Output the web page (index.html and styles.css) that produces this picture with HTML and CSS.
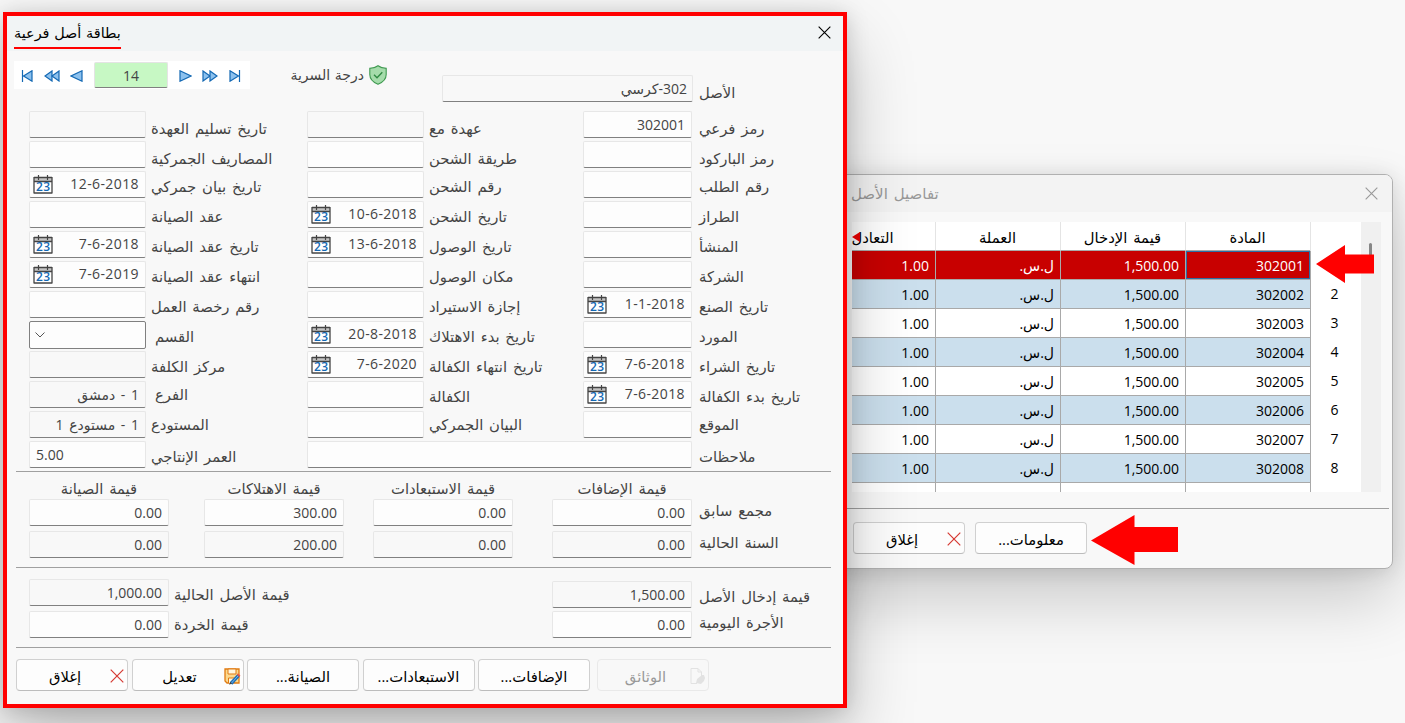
FILE: index.html
```html
<!DOCTYPE html>
<html lang="ar" dir="rtl">
<head>
    <meta charset="UTF-8">
    <title>بطاقة أصل فرعية</title>
    <link rel="stylesheet" href="styles.css">
</head>
<body>
<svg class="defs" width="0" height="0">
    <symbol id="calendar" viewBox="0 0 20 19">
        <rect x="1" y="2.5" width="18" height="15.5" fill="#fff"/>
        <rect x="1" y="2.5" width="18" height="4" fill="#c4c4c4"/>
        <path d="M1 2.5h18M1 6.5h18M1 18h18M1 2v16.5M19 2v16.5" stroke="#444" stroke-width="1.3" fill="none"/>
        <path d="M5.5 0v5M14.5 0v5" stroke="#444" stroke-width="1.2"/>
        <text x="10.3" y="16" text-anchor="middle" direction="ltr" class="cal-text">23</text>
    </symbol>
    <symbol id="cross" viewBox="0 0 14 14">
        <path d="M.7.7l12.6 12.6M13.3.7L.7 13.3" stroke="currentColor" stroke-width="1.2" fill="none"/>
    </symbol>
</svg>

<section class="window details">
    <header class="titlebar">
        <svg class="close" width="13" height="13"><use href="#cross"/></svg>
        <h2>تفاصيل الأصل</h2>
    </header>
    <div class="grid-view">
        <div class="scrollbar"><div class="thumb"></div></div>
        <div class="table-clip">
            <table>
                <thead>
                <tr><th></th><th>المادة</th><th>قيمة الإدخال</th><th>العملة</th><th>التعادل</th></tr>
                </thead>
                <tbody>
                <tr class="selected"><th></th><td class="current">302001</td><td>1,500.00</td><td>ل.س.</td><td>1.00</td></tr>
                <tr><th>2</th><td>302002</td><td>1,500.00</td><td>ل.س.</td><td>1.00</td></tr>
                <tr><th>3</th><td>302003</td><td>1,500.00</td><td>ل.س.</td><td>1.00</td></tr>
                <tr><th>4</th><td>302004</td><td>1,500.00</td><td>ل.س.</td><td>1.00</td></tr>
                <tr><th>5</th><td>302005</td><td>1,500.00</td><td>ل.س.</td><td>1.00</td></tr>
                <tr><th>6</th><td>302006</td><td>1,500.00</td><td>ل.س.</td><td>1.00</td></tr>
                <tr><th>7</th><td>302007</td><td>1,500.00</td><td>ل.س.</td><td>1.00</td></tr>
                <tr><th>8</th><td>302008</td><td>1,500.00</td><td>ل.س.</td><td>1.00</td></tr>
                <tr><th></th><td></td><td></td><td></td><td></td></tr>
                </tbody>
            </table>
            <svg class="more" width="8" height="10"><path d="M0 5l8-5v10z" fill="#e00"/></svg>
        </div>
    </div>
    <footer class="buttons">
        <button><span>معلومات...</span></button>
        <button><svg class="red-x" width="14" height="14"><use href="#cross"/></svg><span>إغلاق</span></button>
    </footer>
</section>

<svg class="arrow arrow-row" width="58" height="38" viewBox="0 0 58 38"><path d="M0 19L29 0v9.5h29v19H29V38z" fill="#f00"/></svg>
<svg class="arrow arrow-info" width="87" height="50" viewBox="0 0 87 50"><path d="M0 25.500L43.500 0v12H87v25H43.500v13z" fill="#f00"/></svg>

<section class="window card">
    <header class="titlebar">
        <svg class="close" width="13" height="13"><use href="#cross"/></svg>
        <h1>بطاقة أصل فرعية</h1>
    </header>

    <div class="top">
        <label class="asset-label">الأصل</label>
        <div class="field ro asset">302-كرسي</div>
        <div class="secrecy">
            <svg width="18" height="20" viewBox="0 0 18 20">
                <path d="M9 .8c2.400 1.900 5 2.600 8.200 2.600v6.200c0 4.700-3.600 7.900-8.200 9.700-4.600-1.800-8.200-5-8.200-9.700V3.400C4 3.400 6.600 2.700 9 .8z" fill="#a5dcab" stroke="#3f9a50" stroke-width="1.100"/>
                <path d="M5 9.800l3 3 5.300-5.600" fill="none" stroke="#2f8a42" stroke-width="1.300"/>
            </svg>
            <span>درجة السرية</span>
        </div>
        <div class="nav">
            <svg width="12" height="12" viewBox="0 0 12 12"><path d="M1 .8L9.500 6 1 11.200z"/><path d="M10.500 0v12"/></svg>
            <svg width="16" height="12" viewBox="0 0 16 12"><path d="M1 1l7 5-7 5z"/><path d="M8 1l7 5-7 5z"/></svg>
            <svg width="13" height="12" viewBox="0 0 13 12"><path d="M1 .8L12 6 1 11.200z"/></svg>
            <div class="record">14</div>
            <svg width="13" height="12" viewBox="0 0 13 12"><path d="M12 .8L1 6l11 5.200z"/></svg>
            <svg width="16" height="12" viewBox="0 0 16 12"><path d="M8 1L1 6l7 5z"/><path d="M15 1L8 6l7 5z"/></svg>
            <svg width="12" height="12" viewBox="0 0 12 12"><path d="M11 .8L2.500 6l8.500 5.200z"/><path d="M1.500 0v12"/></svg>
        </div>
    </div>

    <div class="form">
        <label class="down">رمز فرعي</label><div class="field">302001</div>
        <label class="down">عهدة مع</label><div class="field ro"></div>
        <label class="down">تاريخ تسليم العهدة</label><div class="field ro"></div>

        <label class="down">رمز الباركود</label><div class="field"></div>
        <label class="down">طريقة الشحن</label><div class="field"></div>
        <label class="down">المصاريف الجمركية</label><div class="field"></div>

        <label>رقم الطلب</label><div class="field"></div>
        <label>رقم الشحن</label><div class="field"></div>
        <label>تاريخ بيان جمركي</label><div class="field date">12-6-2018<svg><use href="#calendar"/></svg></div>

        <label>الطراز</label><div class="field"></div>
        <label>تاريخ الشحن</label><div class="field date">10-6-2018<svg><use href="#calendar"/></svg></div>
        <label>عقد الصيانة</label><div class="field"></div>

        <label>المنشأ</label><div class="field"></div>
        <label>تاريخ الوصول</label><div class="field date">13-6-2018<svg><use href="#calendar"/></svg></div>
        <label>تاريخ عقد الصيانة</label><div class="field date">7-6-2018<svg><use href="#calendar"/></svg></div>

        <label>الشركة</label><div class="field"></div>
        <label>مكان الوصول</label><div class="field"></div>
        <label>انتهاء عقد الصيانة</label><div class="field date">7-6-2019<svg><use href="#calendar"/></svg></div>

        <label>تاريخ الصنع</label><div class="field date">1-1-2018<svg><use href="#calendar"/></svg></div>
        <label>إجازة الاستيراد</label><div class="field"></div>
        <label>رقم رخصة العمل</label><div class="field"></div>

        <label>المورد</label><div class="field"></div>
        <label>تاريخ بدء الاهتلاك</label><div class="field date">20-8-2018<svg><use href="#calendar"/></svg></div>
        <label class="indent">القسم</label><div class="field combo"><svg class="chevron" width="10" height="6" viewBox="0 0 10 6"><path d="M.5.5L5 5 9.500.5" fill="none" stroke="#555"/></svg></div>

        <label class="tight">تاريخ&nbsp; الشراء</label><div class="field date">7-6-2018<svg><use href="#calendar"/></svg></div>
        <label>تاريخ انتهاء الكفالة</label><div class="field date">7-6-2020<svg><use href="#calendar"/></svg></div>
        <label>مركز الكلفة</label><div class="field ro"></div>

        <label>تاريخ بدء الكفالة</label><div class="field date">7-6-2018<svg><use href="#calendar"/></svg></div>
        <label>الكفالة</label><div class="field"></div>
        <label class="up indent">الفرع</label><div class="field ro">1 - دمشق</div>

        <label class="up">الموقع</label><div class="field"></div>
        <label class="up">البيان الجمركي</label><div class="field"></div>
        <label class="up">المستودع</label><div class="field ro">1 - مستودع 1</div>

        <label>ملاحظات</label><div class="field notes"></div>
        <label>العمر الإنتاجي</label><div class="field life">5.00</div>
    </div>

    <div class="totals">
        <span></span>
        <h3>قيمة الإضافات</h3>
        <h3>قيمة الاستبعادات</h3>
        <h3>قيمة الاهتلاكات</h3>
        <h3>قيمة الصيانة</h3>

        <label>مجمع سابق</label>
        <div class="field">0.00</div>
        <div class="field">0.00</div>
        <div class="field">300.00</div>
        <div class="field">0.00</div>

        <label>السنة الحالية</label>
        <div class="field ro">0.00</div>
        <div class="field ro">0.00</div>
        <div class="field ro">200.00</div>
        <div class="field ro">0.00</div>
    </div>

    <div class="values">
        <div class="pairs entry">
            <label>قيمة إدخال الأصل</label><div class="field ro">1,500.00</div>
            <label class="up">الأجرة اليومية</label><div class="field">0.00</div>
        </div>
        <div class="pairs now">
            <label>قيمة الأصل الحالية</label><div class="field ro">1,000.00</div>
            <label class="up">قيمة الخردة</label><div class="field">0.00</div>
        </div>
    </div>

    <footer class="buttons">
        <button disabled>
            <svg class="docs" width="16" height="17" viewBox="0 0 16 17"><path d="M1 .5h7l3.500 3.500v5M7 15.500H1V.5M8 .5V4h3.500" fill="none" stroke="#e2e2e2"/><path d="M6 15l1-4 5-4h2l1 3-1 3-3 3z" fill="#e2e2e2"/></svg>
            <span>الوثائق</span>
        </button>
        <button><span>الإضافات...</span></button>
        <button><span>الاستبعادات...</span></button>
        <button><span>الصيانة...</span></button>
        <button>
            <svg class="save" width="17" height="17" viewBox="0 0 17 17">
                <path d="M1 1h14v14H3l-2-2z" fill="#fcd98e" stroke="#e07b12" stroke-width="1.300"/>
                <path d="M4 1h8v5H4zM4.500 15v-5h6v5" fill="#fff6df" stroke="#e07b12"/>
                <path d="M7 15.500l7.500-8" stroke="#1d6fb8" stroke-width="3.400"/>
                <path d="M7.500 15l6.500-7" stroke="#7db9ea" stroke-width="1"/>
                <path d="M14 7.800l1.200-1.300" stroke="#e2574c" stroke-width="3.400"/>
                <path d="M5.200 16.800l1-3 1.800 1.700z" fill="#444"/>
            </svg>
            <span>تعديل</span>
        </button>
        <button><svg class="red-x" width="14" height="14"><use href="#cross"/></svg><span>إغلاق</span></button>
    </footer>
</section>
</body>
</html>
```

FILE: styles.css
```css
* {
    box-sizing: border-box;
}
body {
    margin: 0;
    width: 1405px;
    height: 723px;
    position: relative;
    overflow: hidden;
    background-color: #f8f8f8;
    color: #444;
    font-family: "Open Sans", "DejaVu Sans", sans-serif;
    font-size: 14px;
    line-height: 20px;
}
h1, h2, h3 {
    margin: 0;
    font-size: 14px;
    font-weight: normal;
}
h3, label {
    font-size: 14.8px;
    word-spacing: 2px;
}
.defs {
    display: none;
}
.window {
    position: absolute;
    background-color: #f8f8f8;
}
.titlebar {
    display: flex;
    justify-content: space-between;
    align-items: center;
}

/* asset details window */
.details {
    left: 800px;
    top: 174px;
    width: 593px;
    height: 395px;
    border: 1px solid #b0b0b0;
    border-radius: 8px;
    overflow: hidden;
    box-shadow: 0 32px 64px rgba(0, 0, 0, 0.18), 0 2px 21px rgba(0, 0, 0, 0.13);
}
.details .titlebar {
    height: 37px;
    padding: 0 14px 0 50px;
    background-color: #f3f3f3;
    color: #999;
}
h2 {
    margin-top: -1px;
    font-size: 15px;
    word-spacing: 2px;
}
.grid-view {
    display: flex;
    height: 270px;
    margin: 10px 11px 0 51px;
}
.scrollbar {
    width: 20px;
    padding: 21px 9px 0 0;
    background-color: #f0f0f0;
}
.thumb {
    width: 3px;
    height: 26px;
    border-radius: 2px;
    background-color: #868686;
}
.table-clip {
    position: relative;
    flex: 1;
    overflow: hidden;
    background-color: #fff;
}
table {
    width: 551px;
    table-layout: fixed;
    border-collapse: separate;
    border-spacing: 0;
    color: #000;
}
thead th, td {
    height: 29px;
    padding: 2px 6px 0 5px;
    border-left: 1px solid #a9a9a9;
    border-bottom: 1px solid #a9a9a9;
    text-align: right;
}
td {
    padding-top: 0;
    line-height: 19px;
}
thead th {
    border-left-color: #e4e4e4;
    text-align: center;
    font-size: 14.8px;
    font-weight: normal;
    word-spacing: 2px;
}
thead th:first-child {
    width: 51px;
    border-bottom: 0;
}
tbody th {
    padding: 0 0 2px;
    border-left: 1px solid #a9a9a9;
    font-weight: normal;
    line-height: 19px;
    text-indent: 3px;
}
tbody tr:nth-child(even) td {
    background-color: #cbdfed;
}
.selected td {
    background-color: #c80000;
    color: #fff;
}
td.current {
    box-shadow: inset 0 0 0 1px #2a6ea5;
}
.more {
    position: absolute;
    left: 0;
    top: 10px;
}
.buttons {
    display: flex;
}
.details .buttons {
    justify-content: flex-end;
    gap: 10px;
    margin-top: 16px;
    margin-right: 3px;
    padding: 13px 0 0 52px;
    border-top: 1px solid #a0a0a0;
}
button {
    display: flex;
    align-items: center;
    width: 112px;
    height: 32px;
    padding: 2px 7px 0 3px;
    border: 1px solid #d0d0d0;
    border-bottom-color: #bcbcbc;
    border-radius: 4px;
    background-color: #fdfdfd;
    color: #000;
    font: inherit;
    font-size: 14.8px;
}
button span {
    flex: 1;
    text-align: center;
}
button:not(:has(svg)) {
    padding: 2px 0 0;
}
button:disabled {
    background-color: #f8f8f8;
    border-color: #e9e9e9;
    color: #999;
}
.red-x {
    margin-right: -4px;
    color: #d63a33;
}
.save, .docs {
    margin-right: -5px;
}

/* arrows lie over the details window */
.arrow {
    position: absolute;
}
.arrow-row {
    left: 1316px;
    top: 245px;
}
.arrow-info {
    left: 1091px;
    top: 515px;
}

/* sub asset card */
.card {
    left: 3px;
    top: 12px;
    width: 844px;
    height: 696px;
    border: 4px solid #f00;
    box-shadow: 0 32px 64px rgba(0, 0, 0, 0.24), 0 2px 21px rgba(0, 0, 0, 0.17);
}
.card .titlebar {
    height: 35px;
    padding: 0 12px 0 7px;
    background-color: #f1f4f5;
    color: #000;
}
.card .close {
    margin-top: -3px;
}
h1 {
    padding: 4px 0;
    border-bottom: 2px solid #f00;
    font-size: 14.4px;
    word-spacing: 1px;
}
.top {
    display: flex;
    align-items: flex-start;
    height: 60px;
    padding: 10px 12px 0 7px;
}
.asset-label {
    width: 138px;
    padding: 21px 0 0 6px;
    text-align: left;
}
.field {
    display: flex;
    align-items: center;
    height: 27px;
    padding: 0 6px;
    border: 1px solid #e7e7e7;
    border-bottom-color: #808080;
    border-radius: 2px;
    background-color: #fdfdfd;
    white-space: nowrap;
}
.field.ro {
    background-color: #f8f8f8;
    word-spacing: 2px;
}
.asset {
    width: 251px;
    margin-top: 14px;
    padding: 0 5px;
}
.secrecy {
    display: flex;
    align-items: center;
    gap: 5px;
    margin: 4px 55px 0 auto;
}
.secrecy span {
    word-spacing: 1px;
}
.nav {
    display: flex;
    align-items: center;
    justify-content: space-between;
    width: 236px;
    height: 28px;
    margin-right: auto;
    padding: 0 9px 0 7px;
    background-color: #fff;
}
.nav svg {
    margin-top: 2px;
    fill: #8cc1ee;
    stroke: #1368b3;
    stroke-width: 1.2;
}
.record {
    width: 74px;
    height: 26px;
    line-height: 26px;
    text-align: center;
    border: 1px solid #e4e4e4;
    border-bottom-color: #808080;
    border-radius: 2px;
    background-color: #c7f8c4;
}
.form {
    display: grid;
    grid-template-columns: 139px 109px 159px 117px 161px 117px;
    grid-auto-rows: 30px;
    padding: 0 12px 0 22px;
}
.form label, .totals label, .pairs label {
    padding: 5px 0 0 5px;
    text-align: left;
    white-space: nowrap;
}
.form label.down {
    padding-top: 7px;
}
.form label.up {
    padding-top: 3px;
}
.form label:nth-of-type(3n+1), .totals label, .entry label {
    padding-left: 7px;
}
.form label.indent {
    padding-left: 9px;
}
.form label.tight {
    word-spacing: -1px;
}
.date {
    justify-content: space-between;
    padding: 0 6px 1px 3px;
    letter-spacing: 0.4px;
}
.date svg {
    width: 20px;
    height: 19px;
}
.cal-text {
    font: 600 12px "Open Sans", sans-serif;
    fill: #1368b3;
    letter-spacing: 0.5px;
}
.combo {
    height: 28px;
    border-color: #808080;
    justify-content: flex-end;
}
.chevron {
    margin-left: -1px;
}
.notes {
    grid-column: span 3;
}
.life {
    justify-content: flex-end;
}
.totals {
    display: grid;
    grid-template-columns: 139px 179px 169px 175px 140px;
    grid-template-rows: 27px 32px 36px;
    margin: 0 12px 0 9px;
    padding-left: 13px;
    border-top: 1px solid #a0a0a0;
}
.totals .field, .totals h3 {
    width: 140px;
}
.totals h3 {
    padding-top: 6px;
    text-align: center;
}
.totals label {
    padding-top: 1px;
}
.values {
    display: flex;
    justify-content: space-between;
    height: 80px;
    margin: 0 12px 0 9px;
    padding-left: 13px;
    border-top: 1px solid #a0a0a0;
}
.pairs {
    display: grid;
    grid-template-columns: 139px 140px;
    grid-template-rows: 30px 27px;
    padding-top: 13px;
}
.now {
    grid-template-columns: 160px 140px;
    grid-template-rows: 32px 27px;
    padding-top: 11px;
}
.pairs label.up {
    padding-top: 1px;
}
.now label.up {
    padding-top: 3px;
}
.card .buttons {
    margin: 0 12px 0 9px;
    padding: 11px 122px 0 0;
    gap: 3.5px;
    border-top: 1px solid #a0a0a0;
}
.card .buttons button {
    flex-shrink: 0;
}
.card .buttons button:first-child {
    margin-left: 3.5px;
}
```
